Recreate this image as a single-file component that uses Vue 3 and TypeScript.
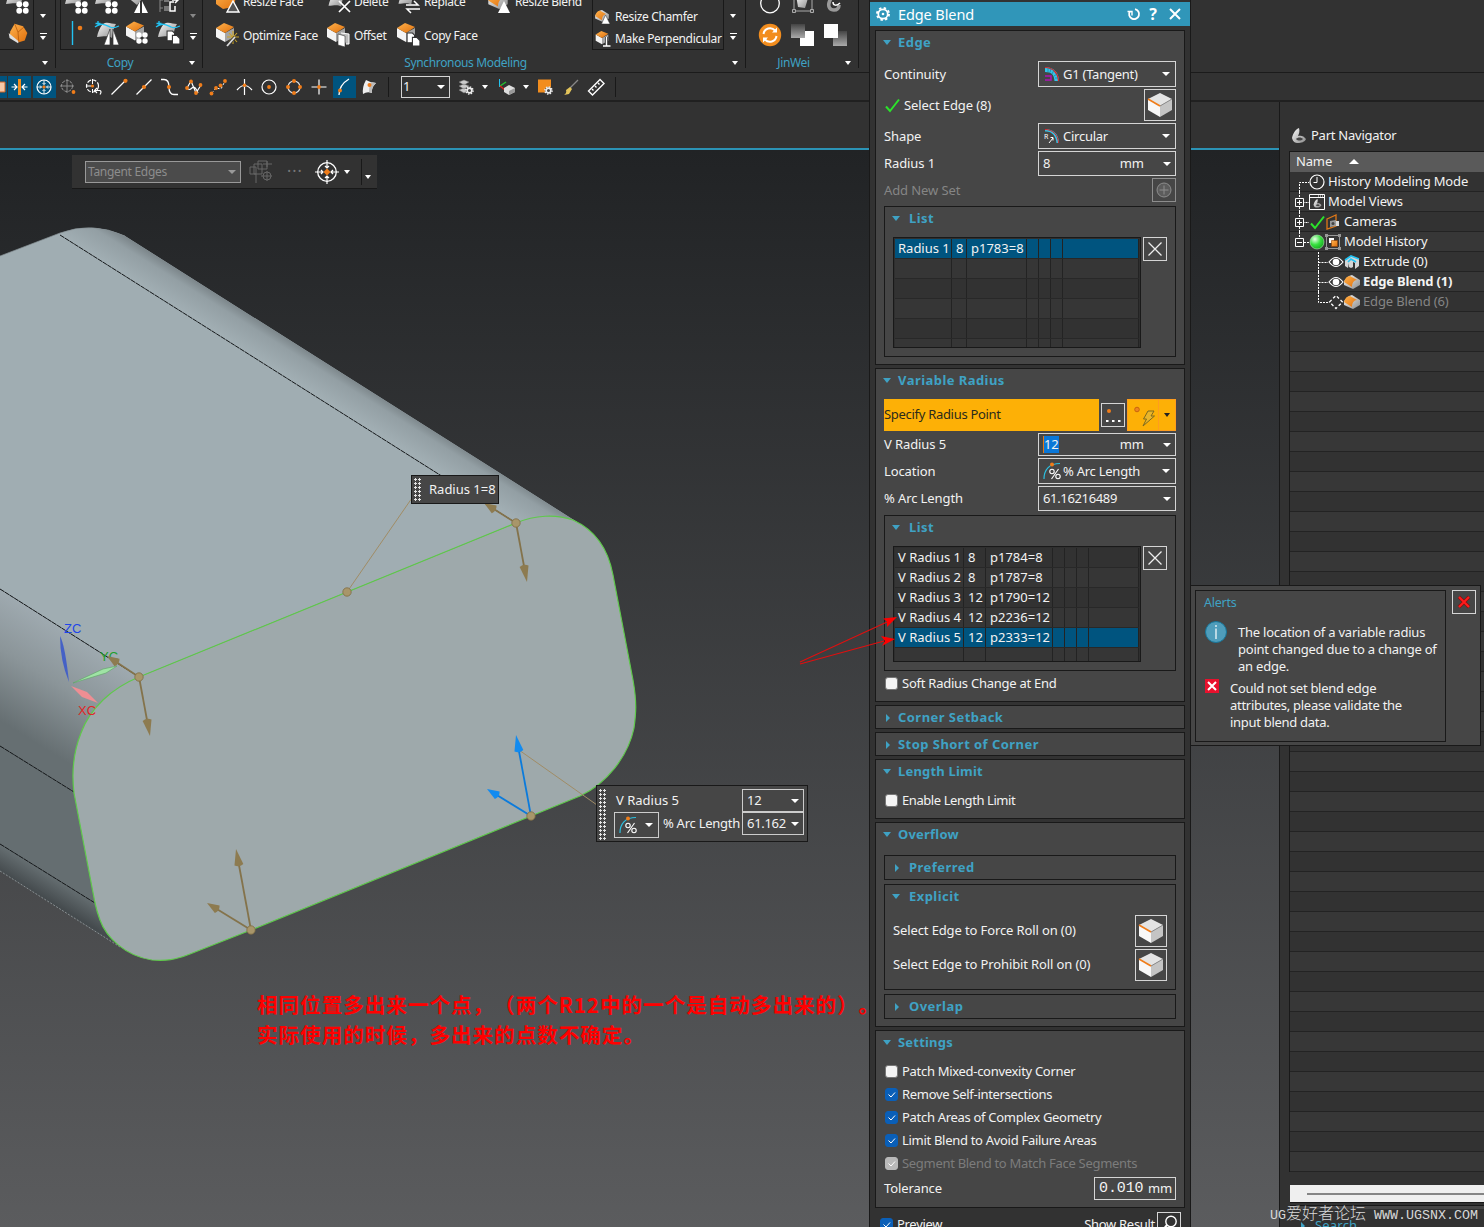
<template>
  <div class="app">
    <svg class="sprite" width="0" height="0">
      <defs>
        <linearGradient id="gOrange" x1="0" y1="0" x2="1" y2="1">
          <stop offset="0" stop-color="#ffb24d" />
          <stop offset="1" stop-color="#e0700c" />
        </linearGradient>
        <linearGradient id="gGrey" x1="0" y1="0" x2="1" y2="1">
          <stop offset="0" stop-color="#fafafa" />
          <stop offset="1" stop-color="#8a8a8a" />
        </linearGradient>
        <linearGradient id="gFade" x1="0" y1="0" x2="0" y2="1">
          <stop offset="0" stop-color="#444" />
          <stop offset="1" stop-color="#aaa" />
        </linearGradient>
        <radialGradient id="gGreen" cx="0.35" cy="0.3" r="0.8">
          <stop offset="0" stop-color="#eaffea" />
          <stop offset="0.5" stop-color="#37e03f" />
          <stop offset="1" stop-color="#14a01c" />
        </radialGradient>
      </defs>

      <symbol id="dots" viewBox="0 0 12 12">
        <circle cx="3" cy="3" r="2.7" fill="#fff" /><circle cx="9" cy="3" r="2.7" fill="#fff" />
        <circle cx="3" cy="9" r="2.7" fill="#fff" /><circle cx="9" cy="9" r="2.7" fill="#fff" />
      </symbol>
      <symbol id="pages" viewBox="0 0 14 14">
        <path d="M1 1h5l2 2v7H1z" fill="#fff" stroke="#333" />
        <path d="M6 5h4l3 3v5H6z" fill="#fff" stroke="#333" />
      </symbol>
      <symbol id="gear" viewBox="0 0 10 10">
        <circle cx="5" cy="5" r="4" fill="#444" stroke="#eee" stroke-width="1.600" stroke-dasharray="1.6 1.5" />
        <circle cx="5" cy="5" r="2.6" fill="none" stroke="#eee" stroke-width="1.800" />
      </symbol>
      <symbol id="block" viewBox="0 0 20 20">
        <path d="M1 5l9 5v9l-9-5z" fill="#f4f4f4" />
        <path d="M10 10l9-5v9l-9 5z" fill="#a5a5a5" />
        <path d="M1 5l8-5 10 4-9 6z" fill="url(#gOrange)" />
      </symbol>
      <symbol id="surface" viewBox="0 0 22 20">
        <path d="M1 15C3 6 6 2 9 1c4-1 7 1 11 1-3 5-3 9-4 14-5-3-9-1-15-1z" fill="url(#gGrey)" />
      </symbol>
      <symbol id="cube" viewBox="0 0 26 26">
        <path d="M13 1l12 6-12 7L1 7z" fill="#e4e4e4" />
        <path d="M1 7l12 7v11L1 18z" fill="#f8f8f8" />
        <path d="M25 7l-12 7v11l12-7z" fill="#c4c4c4" />
        <path d="M13 14l12-7" stroke="#888" stroke-width=".9" />
        <path d="M1 7l12 7" stroke="#f07d1a" stroke-width="1.600" />
      </symbol>
      <symbol id="fillet" viewBox="0 0 16 16">
        <path d="M1 6C8 6 10 9 10.500 15H15C15 6 9 1 1 1z" fill="#33c4e8" />
        <path d="M1 1.500C9 1.500 14 7 14.500 15" fill="none" stroke="#e02020" stroke-width="1.200" />
        <path d="M4 2v4M7 2.500L6 6.500M10 4L8 8M13 8l-3 2M14 12h-3" stroke="#1a7f9a" stroke-width=".7" />
      </symbol>
      <symbol id="arcpct" viewBox="0 0 18 18">
        <path d="M1 17C1 8 6 1.500 17 1.500" fill="none" stroke="#2cc0e0" stroke-width="1.200" />
        <circle cx="9" cy="2.600" r="2" fill="#f07d1a" />
        <circle cx="9" cy="9.500" r="2.200" fill="none" stroke="#fff" stroke-width="1.100" />
        <circle cx="15" cy="14.500" r="2.200" fill="none" stroke="#fff" stroke-width="1.100" />
        <path d="M15.500 7L8.500 17" stroke="#fff" stroke-width="1.100" />
      </symbol>
      <symbol id="blend" viewBox="0 0 16 14">
        <path d="M0 6l5-5 3-1 8 5v5l-7 4-9-4z" fill="url(#gGrey)" />
        <path d="M0 7C1 3 3 1 6 1l7 4c-3 0-5 3-5 7z" fill="url(#gOrange)" />
      </symbol>
      <symbol id="shell" viewBox="0 0 16 16">
        <path d="M1 10C2 5 5 1 8 0c1 3 0 6-1 8 3-1 6 0 8 3-1 3-5 4-8 4-3 0-5-1-6-5z" fill="url(#gGrey)" />
        <path d="M5 11c2-2 5-2 7 0-2 2-5 2-7 0z" fill="#444" />
      </symbol>

      <!-- ribbon -->
      <symbol id="r-surfdots" viewBox="0 0 26 26">
        <use href="#surface" x="0" y="1" width="22" height="20" /><use href="#dots" x="11" y="13" width="13" height="13" />
      </symbol>
      <symbol id="r-mirror0" viewBox="0 0 26 26">
        <path d="M2 8l10-6 9 5-8 10z" fill="url(#gGrey)" />
        <path d="M10 25l6-12v12zM24 25l-6-12v12z" fill="#fff" />
      </symbol>
      <symbol id="r-tree" viewBox="0 0 26 26">
        <path d="M5 2v22M5 12h3M5 20h3" stroke="#888" />
        <path d="M9 9h5v5H9zM9 18h5v5H9z" fill="#777" />
        <path d="M20 18v5h-5V14h4M17 12h6M20 9l3 3-3 3" fill="none" stroke="#fff" stroke-width="1.500" />
      </symbol>
      <symbol id="r-box" viewBox="0 0 26 26">
        <path d="M4 11L9 2l10 3 5 8-3 9-7 2-11-8z" fill="url(#gOrange)" />
        <path d="M2 13l1 6 10 6 1-2z" fill="#ddd" /><path d="M9 2l4 10 1 12M13 12l7-6" stroke="#a94f04" fill="none" stroke-width=".8" />
      </symbol>
      <symbol id="r-axis" viewBox="0 0 26 26">
        <path d="M8.500 1v24" stroke="#22c3f3" stroke-width="1.400" /><circle cx="16" cy="8" r="2.300" fill="#f07d1a" />
      </symbol>
      <symbol id="r-mirror" viewBox="0 0 26 26">
        <use href="#surface" x="2" y="2" width="22" height="20" />
        <path d="M10 25l6-16v16zM25 25l-6-16v16z" fill="#fff" stroke="#333" stroke-width=".7" />
        <path d="M1 7C7 2 12 5 16 7s6 0 9-1M4 1v5M1.500 3.500h5" fill="none" stroke="#22c3f3" stroke-width="1.300" />
      </symbol>
      <symbol id="r-pattern" viewBox="0 0 26 26">
        <use href="#block" x="1" y="1" width="20" height="21" /><use href="#dots" x="12" y="12" width="12" height="12" />
      </symbol>
      <symbol id="r-copygeo" viewBox="0 0 26 26">
        <use href="#surface" x="2" y="2" width="22" height="20" />
        <path d="M1 7C7 2 12 5 16 7s6 0 9-1M4 1v5M1.500 3.500h5" fill="none" stroke="#22c3f3" stroke-width="1.300" />
        <use href="#pages" x="11" y="10" width="15" height="15" />
      </symbol>
      <symbol id="r-resize" viewBox="0 0 26 26">
        <path d="M1 8l10-5 11 4-4 12-10 2-7-5z" fill="url(#gOrange)" />
        <path d="M12 24l6-11 6 11z" fill="#555" stroke="#fff" stroke-width="1.400" />
      </symbol>
      <symbol id="r-delete" viewBox="0 0 26 26">
        <use href="#surface" x="1" y="5" width="20" height="17" />
        <path d="M13 13l11 11M24 13L13 24" stroke="#fff" stroke-width="1.700" />
      </symbol>
      <symbol id="r-replace" viewBox="0 0 26 26">
        <use href="#surface" x="1" y="3" width="20" height="17" />
        <path d="M10 17h12l-4-4M24 21H11l4 4" fill="none" stroke="#fff" stroke-width="1.500" />
      </symbol>
      <symbol id="r-reblend" viewBox="0 0 26 26">
        <use href="#blend" x="1" y="4" width="20" height="17" /><path d="M11 25l6-12 6 12z" fill="#fff" />
      </symbol>
      <symbol id="r-optimize" viewBox="0 0 26 26">
        <use href="#block" x="0" y="1" width="20" height="20" />
        <path d="M18 9v13M12 15h12M14 11l8 9M22 11l-8 9" stroke="#c9a227" stroke-width="1.100" />
        <path d="M12 24l8-9" stroke="#333" stroke-width="3.200" /><path d="M12 24l8-9" stroke="#ddd" stroke-width="1.800" />
      </symbol>
      <symbol id="r-offset" viewBox="0 0 26 26">
        <use href="#block" x="0" y="1" width="20" height="20" />
        <path d="M15 11l8 1v10h-3" fill="#bbb" stroke="#fff" /><path d="M12 12l7 2v11l-7-2z" fill="#fff" stroke="#333" stroke-width=".6" />
      </symbol>
      <symbol id="r-copyface" viewBox="0 0 26 26">
        <use href="#block" x="0" y="1" width="20" height="20" /><use href="#pages" x="10" y="10" width="15" height="15" />
      </symbol>
      <symbol id="r-chamfer" viewBox="0 0 16 16">
        <use href="#blend" x="0" y="1" width="14" height="12" /><path d="M6.500 15l4-9 4.500 9z" fill="#fff" stroke="#333" stroke-width=".5" />
      </symbol>
      <symbol id="r-perp" viewBox="0 0 16 16">
        <use href="#block" x="0" y="0" width="14" height="14" /><path d="M11.500 6v9M8 15h7.500" stroke="#333" stroke-width="3" /><path d="M11.500 6v9M8 15h7.500" stroke="#fff" stroke-width="1.400" />
      </symbol>
      <symbol id="r-circle" viewBox="0 0 26 26">
        <circle cx="13" cy="13.500" r="9.300" fill="none" stroke="#fff" stroke-width="1.300" />
      </symbol>
      <symbol id="r-frame" viewBox="0 0 26 26">
        <path d="M4 2v19h18V2" fill="none" stroke="#aaa" /><path d="M6 5h13l-4 13-7-1z" fill="url(#gGrey)" />
        <path d="M2.500 19.500h3v3h-3zM20.500 19.500h3v3h-3z" fill="#444" stroke="#aaa" />
      </symbol>
      <symbol id="r-hook" viewBox="0 0 26 26">
        <path d="M13 2c-3 3-6 7-7 11-1 4 1 7 5 7 3 0 5-2 5-5" fill="none" stroke="#999" stroke-width="3.600" />
        <path d="M10 12c0 4 4 4 7 1" stroke="#fff" fill="none" stroke-width="1.500" />
      </symbol>
      <symbol id="r-refresh" viewBox="0 0 26 26">
        <circle cx="13" cy="13" r="11.200" fill="#f28d1e" />
        <path d="M6.500 12a6.600 6.600 0 0 1 11.500-3.500M19.500 14A6.600 6.600 0 0 1 8 17.500" fill="none" stroke="#fff" stroke-width="2" />
        <path d="M20 5.500v5h-5zM6 20.500v-5h5z" fill="#fff" />
      </symbol>
      <symbol id="r-sq1" viewBox="0 0 26 26">
        <path d="M10 9h14v15H10z" fill="#fff" /><path d="M1 2h14v14H1z" fill="url(#gFade)" />
      </symbol>
      <symbol id="r-sq2" viewBox="0 0 26 26">
        <path d="M10 9h14v15H10z" fill="url(#gFade)" /><path d="M1 2h14v14H1z" fill="#fff" />
      </symbol>

      <!-- snap toolbar -->
      <symbol id="t-edge" viewBox="0 0 20 20"><path d="M12 5h6v10h-6z" fill="#f6c9a8" stroke="#d06020" /></symbol>
      <symbol id="t-align" viewBox="0 0 20 20">
        <path d="M10.500 2v16" stroke="#f28d1e" stroke-width="3" />
        <path d="M2.500 10H8M5 7l3 3-3 3M18.500 10H13M16 7l-3 3 3 3" fill="none" stroke="#fff" stroke-width="1.200" />
      </symbol>
      <symbol id="t-target" viewBox="0 0 20 20">
        <circle cx="10" cy="10" r="7" fill="none" stroke="#fff" stroke-width="1.200" />
        <path d="M10 3v4.500M10 17v-4.500M3 10h4.500M17 10h-4.500M8.500 6l1.500 1.500L11.500 6M8.500 14l1.500-1.500 1.500 1.500M6 8.500L7.500 10 6 11.500M14 8.500L12.500 10l1.500 1.500" fill="none" stroke="#fff" stroke-width=".9" />
        <circle cx="10" cy="10" r="1.700" fill="#f07d1a" />
      </symbol>
      <symbol id="t-targetdim" viewBox="0 0 20 20">
        <circle cx="8" cy="9" r="5.500" fill="none" stroke="#999" stroke-dasharray="3 1" />
        <path d="M8 2v14M1 9h14" stroke="#888" /><circle cx="14.500" cy="15" r="1.900" fill="#f07d1a" />
      </symbol>
      <symbol id="t-targetback" viewBox="0 0 20 20">
        <circle cx="8.500" cy="9" r="6" fill="none" stroke="#fff" stroke-width="1.200" stroke-dasharray="4 1.500" />
        <path d="M8.500 2v5M2 9h5M8.500 16v-4" stroke="#fff" /><circle cx="8.500" cy="9" r="1.600" fill="#f07d1a" />
        <path d="M11 13.500h5q2 1 0 4M13 11l-2.500 2.500L13 16" fill="#323232" stroke="#fff" stroke-width="1.200" />
      </symbol>
      <symbol id="t-end" viewBox="0 0 20 20"><path d="M2.500 17.500l14-14" stroke="#fff" stroke-width="1.300" /><circle cx="16.500" cy="3.800" r="2.100" fill="#f07d1a" /></symbol>
      <symbol id="t-mid" viewBox="0 0 20 20"><path d="M2.500 17.500l15-15" stroke="#fff" stroke-width="1.300" /><circle cx="10" cy="10" r="2.100" fill="#f07d1a" /></symbol>
      <symbol id="t-ctrl" viewBox="0 0 20 20"><path d="M2 2.500h3q5 0 5 7.500t5 7.500h4" fill="none" stroke="#fff" stroke-width="1.300" /><circle cx="10" cy="10" r="2" fill="#f07d1a" /></symbol>
      <symbol id="t-spline" viewBox="0 0 20 20">
        <path d="M3 11L7 4l5 12 5-8M3 11q2 3 5 0t6 5" fill="none" stroke="#fff" stroke-width="1.200" />
        <g fill="#f07d1a"><circle cx="7" cy="4.500" r="1.900" /><circle cx="3" cy="11" r="1.900" /><circle cx="12" cy="16" r="1.900" /><circle cx="16.500" cy="8" r="1.900" /></g>
      </symbol>
      <symbol id="t-points" viewBox="0 0 20 20">
        <path d="M3 16l4-5 5 1 4-8" stroke="#fff" fill="none" stroke-dasharray="2 2" />
        <g fill="#f07d1a"><circle cx="2.500" cy="16.500" r="1.900" /><circle cx="7" cy="11" r="1.900" /><circle cx="11.500" cy="8.500" r="1.900" /><circle cx="16" cy="4" r="1.900" /></g>
      </symbol>
      <symbol id="t-inter" viewBox="0 0 20 20"><path d="M10.500 2v16M3 13q7.500-9 15 0" fill="none" stroke="#fff" stroke-width="1.200" /><circle cx="10.500" cy="8.300" r="1.800" fill="#f07d1a" /></symbol>
      <symbol id="t-center" viewBox="0 0 20 20"><circle cx="10" cy="10" r="7" fill="none" stroke="#fff" stroke-width="1.200" /><circle cx="10" cy="10" r="1.900" fill="#f07d1a" /></symbol>
      <symbol id="t-quad" viewBox="0 0 20 20">
        <circle cx="10" cy="10" r="6" fill="none" stroke="#ddd" stroke-width="1.200" />
        <g fill="#f07d1a"><circle cx="10" cy="4" r="2" /><circle cx="10" cy="16" r="2" /><circle cx="4" cy="10" r="2" /><circle cx="16" cy="10" r="2" /></g>
      </symbol>
      <symbol id="t-exist" viewBox="0 0 20 20"><path d="M10 2.500v15M2.500 10h15" stroke="#fff" stroke-width="1.200" /><circle cx="10" cy="10" r="1.900" fill="#f07d1a" /></symbol>
      <symbol id="t-curve" viewBox="0 0 20 20"><path d="M5 18q0-10 10-16" fill="none" stroke="#fff" stroke-width="1.300" /><circle cx="6" cy="13.500" r="2" fill="#f07d1a" /></symbol>
      <symbol id="t-face" viewBox="0 0 20 20"><path d="M7 3q5 3 10 3-5 5-4 10-5-2-9 1-1-7 3-14z" fill="#eee" /><path d="M12 5l5 1q-5 5-4 10l-3-1q0-6 2-10z" fill="#bbb" /><circle cx="10.500" cy="8" r="2" fill="#f07d1a" /></symbol>
      <symbol id="t-layers" viewBox="0 0 20 20">
        <path d="M3 5l5-2 5 2-5 3zM3 9l5-2 5 2-5 3zM3 13l5-2 5 2-5 3z" fill="#ccc" stroke="#777" stroke-width=".5" /><use href="#gear" x="9" y="9" width="9" height="9" />
      </symbol>
      <symbol id="t-csys" viewBox="0 0 20 20">
        <path d="M2.500 2v8" stroke="#22c3f3" /><path d="M3 9l6-4" stroke="#26c030" stroke-width="1.500" /><path d="M3 9l5 4" stroke="#e02020" stroke-width="1.500" />
        <path d="M7 11l5-3 6 3v4l-6 3-5-3z" fill="#ddd" /><path d="M18 11l-6 3v4l6-3z" fill="#999" />
      </symbol>
      <symbol id="t-sheet" viewBox="0 0 20 20"><path d="M3 2.500h13v13H3z" fill="#f28d1e" /><use href="#gear" x="9" y="9" width="9" height="9" /></symbol>
      <symbol id="t-brush" viewBox="0 0 20 20"><path d="M17 3l-8 8" stroke="#888" stroke-width="1.200" /><path d="M9 10l2 2-3 5-5 1q3-2 2-5z" fill="#e3c45a" /></symbol>
      <symbol id="t-ruler" viewBox="0 0 20 20"><path d="M2.500 14L14 2.500l4 4L6.500 18zM6 12l1.500 1.500M9 9l1.500 1.500M12 6l1.500 1.500" fill="none" stroke="#fff" stroke-width="1.400" /></symbol>

      <!-- navigator -->
      <symbol id="n-clock" viewBox="0 0 16 16"><circle cx="8" cy="8" r="7" fill="none" stroke="#fff" stroke-width="1.200" /><path d="M8 3v5.500H4.500" fill="none" stroke="#fff" /></symbol>
      <symbol id="n-views" viewBox="0 0 16 16"><path d="M.5.500h15v15H.5zM.5 3.500h15" fill="none" stroke="#fff" /><path d="M9 2h1M11 2h1M13 2h1" stroke="#fff" /><use href="#shell" x="4" y="5" width="9" height="9" /></symbol>
      <symbol id="n-check" viewBox="0 0 16 16"><path d="M2 9.500l4 4.500L15 2.500" fill="none" stroke="#2be32b" stroke-width="2" /></symbol>
      <symbol id="n-cam" viewBox="0 0 16 16"><path d="M2 5l9-4v11l-9 3z" fill="none" stroke="#e07818" stroke-width="1.300" /><path d="M5 7l6-1v6l-6 1z" fill="#999" /><path d="M11 7h3v5h-3z" fill="#ddd" /><circle cx="8" cy="9.500" r="1.500" fill="#444" /></symbol>
      <symbol id="n-ball" viewBox="0 0 16 16"><circle cx="8" cy="8" r="7" fill="url(#gGreen)" stroke="#cfc" stroke-width=".5" /></symbol>
      <symbol id="n-hist" viewBox="0 0 16 16"><path d="M1.500 1.500h13v13h-13z" fill="none" stroke="#999" /><path d="M0 0h3v3H0zM13 0h3v3h-3zM0 13h3v3H0zM13 13h3v3h-3z" fill="#999" /><path d="M4 4h5v5H4z" fill="#fff" /><path d="M6.500 6.500h6v6h-6z" fill="url(#gOrange)" stroke="#933f00" stroke-width=".6" /></symbol>
      <symbol id="n-eye" viewBox="0 0 16 16"><path d="M1 8q7-9 14 0-7 9-14 0z" fill="none" stroke="#fff" stroke-width="1.200" /><circle cx="8" cy="8" r="3.300" fill="#fff" /></symbol>
      <symbol id="n-hidden" viewBox="0 0 16 16"><path d="M1.500 8L8 1.500 14.500 8 8 14.500z" fill="none" stroke="#fff" stroke-width="1.300" stroke-dasharray="3 2.200" /></symbol>
      <symbol id="n-extrude" viewBox="0 0 16 16"><path d="M1 6l6-4 8 3v7l-4 3V9L9 8v5l-2 1-2-1V9l-1 5-3-2z" fill="#d5d5d5" /><path d="M1 6l6-4 8 3M4 8l3-3 5 3" fill="none" stroke="#22c3f3" stroke-width="1.700" /></symbol>
    </svg>

    <header class="ribbon">
      <section class="group g-first">
        <div class="group-body">
          <div class="icon-box one">
            <svg class="i26"><use href="#r-surfdots" /></svg>
            <svg class="i22"><use href="#r-box" /></svg>
          </div>
          <div class="arrows"><i class="caret"></i><i class="caret bar"></i></div>
        </div>
        <div class="group-label"><i class="caret"></i></div>
      </section>
      <section class="group g-copy">
        <div class="group-body">
          <div class="icon-box four">
            <svg v-for="n in copyIcons" :key="n.key" class="i26"><use :href="'#' + n.icon" /></svg>
          </div>
          <div class="arrows"><i class="caret dim"></i><i class="caret bar"></i></div>
        </div>
        <div class="group-label"><span>Copy</span><i class="caret"></i></div>
      </section>
      <section class="group g-sync">
        <div class="group-body">
          <div class="commands">
            <div v-for="c in syncCommands" :key="c.label" class="command">
              <svg class="i26"><use :href="'#' + c.icon" /></svg><span>{{ c.label }}</span>
            </div>
          </div>
          <div class="small-box">
            <div class="small-cmd"><svg class="i16"><use href="#r-chamfer" /></svg><span>Resize Chamfer</span></div>
            <div class="small-cmd"><svg class="i16"><use href="#r-perp" /></svg><span>Make Perpendicular</span></div>
          </div>
          <div class="arrows"><i class="caret"></i><i class="caret bar"></i></div>
        </div>
        <div class="group-label"><span>Synchronous Modeling</span><i class="caret"></i></div>
      </section>
      <section class="group g-jin">
        <div class="group-body">
          <div class="jin-icons">
            <svg v-for="n in jinIcons" :key="n" class="i26"><use :href="'#' + n" /></svg>
          </div>
        </div>
        <div class="group-label"><span>JinWei</span><i class="caret"></i></div>
      </section>
    </header>

    <nav class="toolbar">
      <div class="snap edge on"><svg class="i20"><use href="#t-edge" /></svg></div>
      <div v-for="s in snaps" :key="s.icon" class="snap" :class="{ on: s.on }">
        <svg class="i20"><use :href="'#t-' + s.icon" /></svg>
      </div>
      <div class="tool-sep"></div>
      <div class="layer-select"><span>1</span><i class="caret big"></i></div>
      <svg class="i20 t1"><use href="#t-layers" /></svg>
      <i class="caret"></i>
      <svg class="i20 t2"><use href="#t-csys" /></svg>
      <i class="caret"></i>
      <svg class="i20 t3"><use href="#t-sheet" /></svg>
      <svg class="i20 t3"><use href="#t-brush" /></svg>
      <svg class="i20 t4"><use href="#t-ruler" /></svg>
      <div class="tool-sep last"></div>
    </nav>

    <main class="main">
      <div class="work">
        <div class="border-bar"></div>
        <div class="viewport">
          <svg class="model" width="1279" height="1077" viewBox="0 150 1279 1077">
            <defs>
              <linearGradient id="bandTop" gradientUnits="userSpaceOnUse" x1="300" y1="384" x2="320" y2="352">
                <stop offset="0" stop-color="#a1aeb3" /><stop offset="0.6" stop-color="#939fa4" /><stop offset="1" stop-color="#6f787c" />
              </linearGradient>
              <linearGradient id="bandLeft" gradientUnits="userSpaceOnUse" x1="0" y1="589" x2="-59" y2="684">
                <stop offset="0" stop-color="#9faab0" /><stop offset="0.45" stop-color="#8b9599" /><stop offset="1" stop-color="#666f72" />
              </linearGradient>
              <linearGradient id="bandLow" gradientUnits="userSpaceOnUse" x1="0" y1="844" x2="-12" y2="864">
                <stop offset="0" stop-color="#666f72" /><stop offset="1" stop-color="#454b4e" />
              </linearGradient>
            </defs>
            <path d="M0 256L60 233Q92 221 125 236L577 522L516 523L139 677L0 589Z" fill="#a0adb2" />
            <path d="M60 234Q92 221 125 236L577 522L545 530L516 523Z" fill="url(#bandTop)" />
            <path d="M0 589L139 677L160 800L74 793L0 746Z" fill="url(#bandLeft)" />
            <path d="M0 746L74 792L120 903H95L0 844Z" fill="#656e71" />
            <path d="M0 844L95 903L160 961L120 947L0 871Z" fill="url(#bandLow)" />
            <path d="M60 235L516 523M0 589L139 677M0 746L74 792M0 844L95 903" fill="none" stroke="#15181a" stroke-dasharray="5 .6" />
            <path d="M0 256L60 233Q92 221 125 236" fill="none" stroke="#858f93" stroke-width=".7" />
            <path d="M0 871L120 947" stroke="#a5adb0" stroke-width=".7" stroke-dasharray="2 1.500" />
            <path
              d="M139 677L516 523C535 515 556 514 573 520C595 530 608 548 613 575L633 680C637 703 636 713 634 728C628 757 606 784 580 796L531 816L251 930L190 954C175 960 166 961 152 960C125 956 106 937 100 920Q97 912 95 903L74 793C71 768 75 748 81 733C90 708 112 688 139 677Z"
              fill="#9ea9ab" stroke="#5fc94b" stroke-width="1.200"
            />

            <path d="M60 636Q65 645 69 682Q60 660 60 636Z" fill="#4561c6" />
            <path d="M73 683L103 669L117 666L106 673Z" fill="#9fe3a5" stroke="#5da564" stroke-width=".6" />
            <path d="M71 686L87 692L98 703L82 697Z" fill="#ee8e93" />
            <text x="64" y="633" class="axis" fill="#1f46e8">ZC</text>
            <text x="100" y="661" class="axis" fill="#23a02c">YC</text>
            <text x="78" y="715" class="axis" fill="#e02727">XC</text>

            <g class="leader"><path d="M347 592L412 498M519 750L597 805" /></g>
            <g v-for="(h, i) in handles" :key="i" :stroke="h.blue ? '#0b7bdc' : '#84734b'" :fill="h.blue ? '#128bf0' : '#8d7b50'">
              <path v-for="(p, j) in h.tips" :key="j" :d="shaft(h, p)" stroke-width="1.800" />
              <path v-for="(p, j) in h.tips" :key="'t' + j" :d="arrowHead(h, p)" stroke="none" />
              <circle :cx="h.x" :cy="h.y" r="4.200" fill="#a8966a" stroke="#7d6c43" stroke-width=".8" />
            </g>
            <circle cx="347" cy="592" r="4.200" fill="#a8966a" stroke="#7d6c43" stroke-width=".8" />
          </svg>

          <div class="selection-bar">
            <div class="tangent"><span>Tangent Edges</span><i class="caret big"></i></div>
            <svg class="dimtool" viewBox="0 0 26 26">
              <path d="M2 8h6v7H2zM6 5h8v10H6zM10 2h9v8h-9zM8 15v9M19 2v6M15 5h9M19 12v10M13 17h11" fill="none" stroke="#666" />
              <circle cx="19" cy="17" r="4" fill="none" stroke="#666" />
            </svg>
            <span class="ellipsis">···</span>
            <svg class="aim" viewBox="0 0 24 24">
              <circle cx="12" cy="12" r="9.300" fill="none" stroke="#fff" stroke-width="1.300" />
              <path d="M12 0v8M12 24v-8M0 12h8M24 12h-8M10 6l2 2 2-2M10 18l2-2 2 2M6 10l2 2-2 2M18 10l-2 2 2 2" fill="none" stroke="#fff" stroke-width="1.200" />
              <path d="M12 8.500l3.500 3.500-3.500 3.500L8.500 12z" fill="#f07d1a" />
            </svg>
            <i class="caret"></i>
            <div class="sel-end"><i class="caret"></i></div>
          </div>

          <div class="tag"><i class="grip"></i><span>Radius 1=8</span></div>
          <div class="mini">
            <i class="grip"></i>
            <div class="mini-body">
              <div class="mini-row">
                <span>V Radius 5</span>
                <div class="mini-field"><span>12</span><i class="caret big"></i></div>
              </div>
              <div class="mini-row">
                <div class="mini-type"><svg class="i18"><use href="#arcpct" /></svg><i class="caret big"></i></div>
                <span>% Arc Length</span>
                <div class="mini-field"><span>61.162</span><i class="caret big"></i></div>
              </div>
            </div>
          </div>

          <div class="note">
            <p>相同位置多出来一个点，（两个R12中的一个是自动多出来的）。</p>
            <p>实际使用的时候，多出来的点数不确定。</p>
          </div>
        </div>
      </div>

      <aside class="navigator">
        <div class="nav-title"><svg class="i16"><use href="#shell" /></svg><span>Part Navigator</span></div>
        <div class="nav-list">
          <div class="nav-head"><span>Name</span><i class="up"></i></div>
          <div v-for="(t, i) in treeRows" :key="i" class="nav-row">
            <template v-if="t">
              <svg :width="t.deep ? 38 : 19" height="20">
                <g fill="none" stroke="#fff" stroke-dasharray="2 1">
                  <path v-if="t.deep" :d="t.last ? 'M28.500 0V10.500H38' : 'M28.500 0V20M28.500 10.500H38'" />
                  <path v-else :d="t.first ? 'M9.500 20V10.500H19' : t.last ? 'M9.500 0V10.500H19' : 'M9.500 0V20M9.500 10.500H19'" />
                </g>
                <g v-if="t.box">
                  <path d="M5.500 6.500h8v8h-8z" fill="#333" stroke="#fff" />
                  <path :d="t.box === '+' ? 'M7 10.500h5M9.500 8v5' : 'M7 10.500h5'" stroke="#fff" />
                </g>
              </svg>
              <svg v-for="ic in t.icons" :key="ic" class="i16"><use :href="'#' + ic" /></svg>
              <span :class="{ bold: t.bold, dim: t.dim }">{{ t.label }}</span>
            </template>
          </div>
        </div>
        <div class="nav-scroll"><i></i></div>
        <div class="nav-search"><i class="tri right"></i><span>Search</span></div>
      </aside>
    </main>

    <section class="dialog">
      <div class="dlg-title">
        <svg width="16" height="16" viewBox="0 0 16 16">
          <circle cx="8" cy="8" r="6" fill="none" stroke="#fff" stroke-width="2" stroke-dasharray="2.360 2.350" />
          <circle cx="8" cy="8" r="4.700" fill="none" stroke="#fff" stroke-width="1.700" /><circle cx="8" cy="8" r="1.300" fill="#fff" />
        </svg>
        <span>Edge Blend</span>
        <svg class="reset" width="14" height="14" viewBox="0 0 14 14">
          <path d="M2.800 4.500A5 5 0 1 0 8 2.200" fill="none" stroke="#fff" stroke-width="1.800" /><path d="M.500 4.500h4.500v4" fill="none" stroke="#fff" stroke-width="1.400" />
        </svg>
        <b class="help">?</b>
        <svg width="12" height="12" viewBox="0 0 12 12"><path d="M1 1l10 10M11 1L1 11" stroke="#fff" stroke-width="2" /></svg>
      </div>

      <div class="panels">
        <div class="panel p-edge">
          <h3><i class="tri"></i>Edge</h3>
          <div class="row h26"><label>Continuity</label>
            <div class="combo"><svg class="i16"><use href="#fillet" /><path d="M1 10h6v4H1" fill="none" stroke="#b012b8" stroke-width="1.500" /></svg><span>G1 (Tangent)</span><i class="caret big"></i></div>
          </div>
          <div class="row h32"><svg class="i16"><use href="#n-check" /></svg><label class="picked">Select Edge (8)</label><div class="cube-btn"><svg class="i26"><use href="#cube" /></svg></div></div>
          <div class="row h26"><label>Shape</label>
            <div class="combo">
              <svg class="i16" viewBox="0 0 16 16"><path d="M1 3.500C8 3 12 8 12.500 15H15C15 6 9 1 1 1z" fill="#33c4e8" /><path d="M1 1.500C9 1.500 14 7 14.500 15" fill="none" stroke="#e02020" /><text x="0" y="11" font-size="7" fill="#fff">R</text><path d="M5 15l4-5M6.500 9.500H9v3" fill="none" stroke="#fff" /></svg>
              <span>Circular</span><i class="caret big"></i>
            </div>
          </div>
          <div class="row h25"><label>Radius 1</label><div class="combo num"><span>8</span><em>mm</em><i class="caret big"></i></div></div>
          <div class="row h24"><label class="dim">Add New Set</label>
            <div class="add-btn"><svg width="16" height="16"><circle cx="8" cy="8" r="7" fill="#5c5c5c" stroke="#8d8d8d" /><path d="M3.500 8h9M8 3.500v9" stroke="#8d8d8d" /></svg></div>
          </div>
          <div class="sub list-edge">
            <h3><i class="tri"></i>List</h3>
            <div class="list-wrap">
              <div class="grid-list short">
                <div v-for="(r, i) in radiusRows" :key="i" class="grid-row" :class="{ on: i === 0 }"><b v-for="(c, j) in r" :key="j">{{ c }}</b></div>
              </div>
              <div class="x-btn"><svg width="16" height="16"><path d="M1.500 1.500l13 13M14.500 1.500l-13 13" stroke="#eee" stroke-width="1.300" /></svg></div>
            </div>
          </div>
        </div>

        <div class="panel p-var">
          <h3><i class="tri"></i>Variable Radius</h3>
          <div class="row h32 specify">
            <div class="spec-label">Specify Radius Point</div>
            <div class="pt-btn"><svg width="22" height="22"><circle cx="7" cy="7" r="2" fill="#f07d1a" /><path d="M4 16h2.500v2H4zM10 16h2.500v2H10zM16 16h2.500v2H16z" fill="#fff" /></svg></div>
            <div class="infer">
              <svg width="30" height="30"><circle cx="9" cy="9.500" r="2.300" fill="#ee8520" stroke="#c8650c" /><path d="M20 11h6l-3 5h3.500L15 26l3.500-7H15.500z" fill="#e9b52b" stroke="#7d6a1f" /></svg>
              <div class="infer-drop"><i class="caret dark"></i></div>
            </div>
          </div>
          <div class="row h23"><label>V Radius 5</label><div class="combo num"><span class="sel">12</span><em>mm</em><i class="caret big"></i></div></div>
          <div class="row h26"><label>Location</label><div class="combo"><svg class="i18"><use href="#arcpct" /></svg><span class="tight">% Arc Length</span><i class="caret big"></i></div></div>
          <div class="row h25"><label>% Arc Length</label><div class="combo num"><span class="long">61.16216489</span><i class="caret big"></i></div></div>
          <div class="sub list-var">
            <h3><i class="tri"></i>List</h3>
            <div class="list-wrap">
              <div class="grid-list tall">
                <div v-for="(r, i) in vRadiusRows" :key="i" class="grid-row" :class="{ on: i === 4 }"><b v-for="(c, j) in r" :key="j">{{ c }}</b></div>
              </div>
              <div class="x-btn"><svg width="16" height="16"><path d="M1.500 1.500l13 13M14.500 1.500l-13 13" stroke="#eee" stroke-width="1.300" /></svg></div>
            </div>
          </div>
          <div class="check soft"><i class="cb"></i>Soft Radius Change at End</div>
        </div>

        <div class="panel closed"><h3><i class="tri right"></i>Corner Setback</h3></div>
        <div class="panel closed"><h3><i class="tri right"></i>Stop Short of Corner</h3></div>
        <div class="panel p-len">
          <h3><i class="tri"></i>Length Limit</h3>
          <div class="check len"><i class="cb"></i>Enable Length Limit</div>
        </div>

        <div class="panel p-over">
          <h3><i class="tri"></i>Overflow</h3>
          <div class="sub closed"><h3><i class="tri right"></i>Preferred</h3></div>
          <div class="sub explicit">
            <h3><i class="tri"></i>Explicit</h3>
            <div class="roll"><label>Select Edge to Force Roll on (0)</label><div class="cube-btn"><svg class="i26"><use href="#cube" /></svg></div></div>
            <div class="roll"><label>Select Edge to Prohibit Roll on (0)</label><div class="cube-btn"><svg class="i26"><use href="#cube" /></svg></div></div>
          </div>
          <div class="sub closed"><h3><i class="tri right"></i>Overlap</h3></div>
        </div>

        <div class="panel p-set">
          <h3><i class="tri"></i>Settings</h3>
          <div v-for="s in settings" :key="s.label" class="check" :class="{ dim: s.disabled }">
            <i class="cb" :class="{ yes: s.checked, off: s.disabled }"><svg v-if="s.checked" width="11" height="11"><path d="M2.500 5.500L5 8l4-4.500" fill="none" stroke="#fff" /></svg></i>{{ s.label }}
          </div>
          <div class="row h23 tol"><label>Tolerance</label><div class="tol-field"><span>0.010</span><em>mm</em></div></div>
        </div>
      </div>

      <div class="preview">
        <i class="cb yes"><svg width="11" height="11"><path d="M2.500 5.500L5 8l4-4.500" fill="none" stroke="#fff" /></svg></i><span>Preview</span>
        <span class="show">Show Result</span>
        <div class="mag"><svg width="22" height="22"><circle cx="13" cy="8.500" r="5.200" fill="none" stroke="#fff" stroke-width="1.400" /><path d="M9 12l-5 6" stroke="#fff" stroke-width="2" /></svg></div>
      </div>
    </section>

    <section class="alerts">
      <div class="alert-box">
        <h4>Alerts</h4>
        <div class="alert info">
          <svg width="24" height="24"><circle cx="12" cy="12" r="10.500" fill="#4f9dbb" stroke="#17769a" /><path d="M12 5v2M12 8.500V19" stroke="#fff" stroke-width="1.200" /></svg>
          <p>The location of a variable radius<br />point changed due to a change of<br />an edge.</p>
        </div>
        <div class="alert err">
          <svg width="14" height="14"><path d="M0 0h14v14H0z" fill="#e8112d" /><path d="M3 3l8 8M11 3l-8 8" stroke="#fff" stroke-width="2" /></svg>
          <p>Could not set blend edge<br />attributes, please validate the<br />input blend data.</p>
        </div>
      </div>
      <div class="alert-close"><svg width="16" height="16"><path d="M3 3l10 10M13 3L3 13" stroke="#8d0d0d" stroke-width="3.400" /><path d="M3 3l10 10M13 3L3 13" stroke="#ff1c1c" stroke-width="2" /></svg></div>
    </section>

    <svg class="callouts" width="110" height="60" viewBox="795 610 110 60">
      <g stroke="#e00f0f" stroke-width="1.100"><path d="M800 662L887 622" /><path d="M800 664L884 641" /></g>
      <path d="M897 617L887 627L887 621.500L883 618.500Z M895 639L882 646L885 641L881 636Z" fill="#f00" />
    </svg>
    <div class="watermark">UG<span>爱好者论坛</span> WWW.UGSNX.COM</div>
  </div>
</template>

<script setup lang="ts">
import { ref } from 'vue'

interface TreeRow {
  label: string
  icons: string[]
  box?: string
  first?: boolean
  last?: boolean
  deep?: boolean
  bold?: boolean
  dim?: boolean
}

interface Handle {
  x: number
  y: number
  tips: number[][]
  blue?: boolean
}

const copyIcons = ref(
  ['r-surfdots', 'r-surfdots', 'r-mirror0', 'r-tree', 'r-axis', 'r-mirror', 'r-pattern', 'r-copygeo'].map((icon, key) => ({ icon, key }))
)

const syncCommands = ref([
  { label: 'Resize Face', icon: 'r-resize' },
  { label: 'Delete', icon: 'r-delete' },
  { label: 'Replace', icon: 'r-replace' },
  { label: 'Resize Blend', icon: 'r-reblend' },
  { label: 'Optimize Face', icon: 'r-optimize' },
  { label: 'Offset', icon: 'r-offset' },
  { label: 'Copy Face', icon: 'r-copyface' }
])

const jinIcons = ref(['r-circle', 'r-frame', 'r-hook', 'r-refresh', 'r-sq1', 'r-sq2'])

const snaps = ref([
  { icon: 'align', on: true },
  { icon: 'target', on: true },
  { icon: 'targetdim' },
  { icon: 'targetback' },
  { icon: 'end' },
  { icon: 'mid' },
  { icon: 'ctrl' },
  { icon: 'spline' },
  { icon: 'points' },
  { icon: 'inter' },
  { icon: 'center' },
  { icon: 'quad' },
  { icon: 'exist' },
  { icon: 'curve', on: true },
  { icon: 'face' }
])

const tree: TreeRow[] = [
  { label: 'History Modeling Mode', icons: ['n-clock'], first: true },
  { label: 'Model Views', icons: ['n-views'], box: '+' },
  { label: 'Cameras', icons: ['n-check', 'n-cam'], box: '+' },
  { label: 'Model History', icons: ['n-ball', 'n-hist'], box: '-', last: true },
  { label: 'Extrude (0)', icons: ['n-eye', 'n-extrude'], deep: true },
  { label: 'Edge Blend (1)', icons: ['n-eye', 'blend'], deep: true, bold: true },
  { label: 'Edge Blend (6)', icons: ['n-hidden', 'blend'], deep: true, last: true, dim: true }
]

// the list is padded with empty striped rows
const treeRows = Array.from({ length: 50 }, (_, i) => tree[i])

const blank = ['', '', '', '', '', '', '']
const radiusRows = [['Radius 1', '8', 'p1783=8', '', '', '', ''], blank, blank, blank, blank, blank]
const vRadiusRows = [
  ['V Radius 1', '8', 'p1784=8', '', '', '', ''],
  ['V Radius 2', '8', 'p1787=8', '', '', '', ''],
  ['V Radius 3', '12', 'p1790=12', '', '', '', ''],
  ['V Radius 4', '12', 'p2236=12', '', '', '', ''],
  ['V Radius 5', '12', 'p2333=12', '', '', '', ''],
  blank
]

const settings = ref([
  { label: 'Patch Mixed-convexity Corner', checked: false },
  { label: 'Remove Self-intersections', checked: true },
  { label: 'Patch Areas of Complex Geometry', checked: true },
  { label: 'Limit Blend to Avoid Failure Areas', checked: true },
  { label: 'Segment Blend to Match Face Segments', checked: true, disabled: true }
])

const handles: Handle[] = [
  { x: 139, y: 677, tips: [[107, 656], [150, 736]] },
  { x: 516, y: 523, tips: [[484, 503], [527, 582]] },
  { x: 251, y: 930, tips: [[207, 903], [236, 849]] },
  { x: 531, y: 816, tips: [[487, 789], [516, 735]], blue: true }
]

// unit direction of the shaft and the centre of the cone's base
const cone = (h: Handle, tip: number[]) => {
  const len = Math.hypot(tip[0] - h.x, tip[1] - h.y)
  const ux = (tip[0] - h.x) / len
  const uy = (tip[1] - h.y) / len
  const size = len > 55 ? 16 : 12
  return { ux, uy, bx: tip[0] - ux * size, by: tip[1] - uy * size }
}

const shaft = (h: Handle, tip: number[]) => {
  const { bx, by } = cone(h, tip)
  return `M${h.x} ${h.y}L${bx} ${by}`
}

const arrowHead = (h: Handle, tip: number[]) => {
  const { ux, uy, bx, by } = cone(h, tip)
  return `M${tip[0]} ${tip[1]}L${bx - uy * 4.5} ${by + ux * 4.5}Q${bx - ux * 3} ${by - uy * 3} ${bx + uy * 4.5} ${by - ux * 4.5}Z`
}
</script>

<style>
body {
  background: #323232;
  overflow: hidden;
}
</style>

<style scoped>
* {
  box-sizing: border-box;
}

.app {
  position: relative;
  width: 1484px;
  height: 1227px;
  overflow: hidden;
  display: flex;
  flex-direction: column;
  background: #323232;
  color: #f2f2f2;
  font: 13px/17px "Noto Sans", "Noto Sans CJK SC", sans-serif;
  white-space: nowrap;
}

.sprite {
  position: absolute;
}

svg {
  display: block;
  flex: none;
}

h3, h4, p {
  margin: 0;
}

em {
  font-style: normal;
}

.i26 { width: 26px; height: 26px; }
.i22 { width: 22px; height: 22px; }
.i20 { width: 20px; height: 20px; }
.i18 { width: 18px; height: 18px; }
.i16 { width: 16px; height: 16px; }

.caret {
  flex: none;
  width: 0;
  height: 0;
  border: 3.5px solid transparent;
  border-top: 4px solid #fff;
  border-bottom: 0;
}

.caret.big {
  border-left-width: 4px;
  border-right-width: 4px;
}

.caret.dim { border-top-color: #888; }
.caret.dark { border-top-color: #222; }

/* ribbon */
.ribbon {
  flex: none;
  display: flex;
  height: 73px;
  border-bottom: 1px solid #1b1b1b;
  overflow: hidden;
  font-size: 12px;
  letter-spacing: -.35px;
}

.group {
  height: 72px;
  display: flex;
  flex-direction: column;
  background: linear-gradient(#191919, #191919) right top / 1px 68px no-repeat;
}

.g-first { width: 56px; }
.g-copy { width: 147px; padding-left: 4px; }
.g-sync { width: 543px; }
.g-jin { width: 113px; }

.group-body {
  display: flex;
  height: 52px;
  overflow: hidden;
}

.group-label {
  display: flex;
  align-items: center;
  height: 20px;
  padding-top: 1px;
  color: #3fa2c4;
}

.group-label span {
  flex: 1;
  padding-right: 4px;
  text-align: center;
}

.g-copy .group-label span { padding-right: 9px; }

.group-label .caret {
  margin: 0 8px 0 auto;
}

.icon-box {
  height: 50px;
  border: 1px solid #191919;
  border-top: 0;
  display: grid;
  grid-auto-rows: 32px;
  align-content: end;
  place-items: center;
}

.icon-box.one { width: 34px; border-left: 0; padding-left: 2px; }
.icon-box.four { width: 124px; grid-template-columns: 30px 29px 31px 32px; padding-left: 1px; }

.arrows {
  display: flex;
  flex-direction: column;
  align-items: center;
  gap: 18px;
  width: 18px;
  padding-top: 14px;
}

.caret.bar {
  position: relative;
}

.caret.bar::before {
  content: '';
  position: absolute;
  left: -3.5px;
  top: -7px;
  width: 7px;
  height: 1px;
  background: #fff;
}

.commands {
  width: 389px;
  padding-left: 12px;
  display: grid;
  grid-template-columns: 111px 70px 91px auto;
  grid-auto-rows: 34px;
  align-content: end;
}

.command {
  display: flex;
  align-items: center;
  gap: 2px;
}

.small-box {
  width: 132px;
  height: 50px;
  border: 1px solid #191919;
  border-top: 0;
  display: flex;
  flex-direction: column;
  justify-content: flex-end;
}

.small-cmd {
  height: 22px;
  display: flex;
  align-items: center;
  gap: 4px;
  padding: 1px 0 0 2px;
}

.jin-icons {
  display: grid;
  grid-template-columns: 33px 33px 33px;
  grid-auto-rows: 32px;
  place-items: center;
  align-content: end;
  padding: 0 0 1px 7px;
}

/* snap toolbar */
.toolbar {
  flex: none;
  height: 29px;
  display: flex;
  align-items: center;
  border-bottom: 2px solid #202020;
}

.snap {
  width: 23px;
  height: 22px;
  margin: 0 1px;
  display: flex;
  align-items: center;
  justify-content: center;
}

.snap.on { background: #00547f; }
.snap.edge { width: 6.5px; margin: 0; justify-content: flex-end; overflow: hidden; }

.tool-sep {
  width: 1px;
  height: 20px;
  margin: 0 12px 0 6.5px;
  background: #191919;
}

.tool-sep.last { margin: 0 0 0 9px; }

.layer-select {
  width: 49px;
  height: 22px;
  border: 1px solid #d5d5d5;
  display: flex;
  align-items: center;
  justify-content: space-between;
  padding: 0 4px 0 1px;
}

.t1 { margin: 0 6px 0 6px; }
.t2 { margin: 0 6px 0 9px; }
.t3 { margin-left: 6px; }
.t4 { margin-left: 5px; }

/* work area */
.main {
  flex: 1;
  display: flex;
  min-height: 0;
}

.work {
  width: 1279px;
  display: flex;
  flex-direction: column;
}

.border-bar {
  height: 48px;
  border-bottom: 2px solid #2b93b5;
}

.viewport {
  position: relative;
  flex: 1;
  overflow: hidden;
  background: linear-gradient(#212325, #5b5c5e);
}

.axis {
  font: 13px "Liberation Sans", sans-serif;
}

.leader {
  fill: none;
  stroke: #a08c65;
  stroke-width: 1;
}

.selection-bar {
  position: absolute;
  left: 72px;
  top: 5px;
  width: 305px;
  height: 34px;
  background: #323232;
  border-bottom: 1px solid #181818;
  display: flex;
  align-items: center;
  padding-left: 13px;
}

.tangent {
  width: 156px;
  height: 22px;
  border: 1px solid #999;
  background: #4b4b4b;
  color: #8d8d8d;
  font-size: 12px;
  letter-spacing: -.3px;
  display: flex;
  align-items: center;
  justify-content: space-between;
  padding: 0 4px 0 2px;
}

.tangent .caret { border-top-color: #999; }
.dimtool { width: 26px; height: 26px; margin-left: 7px; }
.ellipsis { width: 20px; margin: 0 8px 0 13px; color: #777; font-size: 16px; letter-spacing: 1px; }
.aim { width: 24px; height: 24px; margin-right: 5px; }

.sel-end {
  height: 26px;
  margin-left: 11px;
  padding: 21px 0 0 3px;
  border-left: 1px solid #191919;
}

.grip {
  flex: none;
  width: 8px;
  background: radial-gradient(circle at 1.5px 1.5px, #e4e4e4 1.1px, transparent 1.4px) 0 0 / 4px 4px;
}

.tag {
  position: absolute;
  left: 411px;
  top: 325px;
  width: 88px;
  height: 29px;
  border: 1px solid #191919;
  background: #464646;
  display: flex;
  align-items: center;
  gap: 7px;
  padding-left: 2px;
}

.tag .grip { height: 24px; }

.mini {
  position: absolute;
  left: 596px;
  top: 635px;
  width: 212px;
  height: 57px;
  border: 1px solid #191919;
  background: #464646;
  display: flex;
  padding: 3px;
}

.mini .grip { height: 52px; margin-right: 6px; margin-left: -1px; }
.mini-body { flex: 1; }

.mini-row {
  display: flex;
  align-items: center;
  justify-content: space-between;
  height: 23px;
}

.mini-row > span:first-child { padding-left: 3px; }
.mini-row > div + span { letter-spacing: -.25px; padding-left: 2px; }

.mini-field {
  width: 62px;
  height: 23px;
  border: 1px solid #ccc;
  display: flex;
  align-items: center;
  justify-content: space-between;
  padding: 0 4px;
  letter-spacing: -.3px;
}

.mini-type {
  width: 45px;
  height: 26px;
  margin-left: 1px;
  margin-top: 3px;
  border: 1px solid #ccc;
  display: flex;
  align-items: center;
  justify-content: space-between;
  padding: 0 5px 0 4px;
}

.note {
  position: absolute;
  left: 257px;
  top: 839px;
  color: #f00;
  font: bold 20.6px/30px "Noto Sans CJK SC", sans-serif;
  letter-spacing: .96px;
  text-spacing-trim: space-all;
}

/* part navigator */
.navigator {
  width: 205px;
  border-left: 1px solid #191919;
  padding-left: 9px;
  display: flex;
  flex-direction: column;
  letter-spacing: -.15px;
}

.navigator > div { flex: none; }

.nav-title {
  height: 49px;
  display: flex;
  align-items: center;
  gap: 4px;
  padding: 18px 0 0 2px;
  letter-spacing: -.25px;
}

.nav-list {
  border-left: 1px solid #191919;
  border-top: 1px solid #191919;
}

.nav-head {
  height: 20px;
  background: #5a5a5a;
  display: flex;
  align-items: center;
  gap: 17px;
  padding: 0 0 1px 6px;
}

.up {
  border: 5px solid transparent;
  border-bottom: 5px solid #fff;
  border-top: 0;
}

.nav-row {
  height: 20px;
  display: flex;
  align-items: center;
  background: #323232;
  border-bottom: 1px solid #232323;
}

.nav-row:nth-child(odd) { background: #373737; }
.nav-row span { padding-left: 3px; }
.bold { font-weight: 700; }
.dim { color: #858585; }

.nav-scroll {
  height: 18px;
  margin: 13px 0 0 1px;
  background: #efefef;
  border-bottom: 1px solid #191919;
}

.nav-scroll i {
  display: block;
  height: 2px;
  margin: 8px 0 0 17px;
  background: #858585;
}

.nav-search {
  display: flex;
  align-items: center;
  gap: 2px;
  height: 40px;
  margin: 2px 0 0 1px;
  padding: 0 0 0 8px;
  border-top: 1px solid #191919;
  background: linear-gradient(#464646, #464646) 0 0 / 100% 3px no-repeat;
  color: #3fa2c4;
  letter-spacing: .2px;
}

/* dialog */
.dialog {
  position: absolute;
  left: 869px;
  top: 0;
  width: 322px;
  height: 1227px;
  background: #323232;
  border: solid #191919;
  border-width: 0 1px;
  padding-top: 2px;
  overflow: hidden;
}

.dlg-title {
  height: 24px;
  margin: 0 -1px;
  background: #3096b9;
  display: flex;
  align-items: center;
  padding: 0 10px 0 6px;
  font-size: 14.5px;
  color: #fff;
}

.dlg-title span { margin-left: 7px; letter-spacing: -.1px; }
.reset { margin-left: auto; }

.help {
  width: 8px;
  margin: 0 12px 0 8px;
  font-size: 16px;
  text-align: center;
}

.panels {
  display: flex;
  flex-direction: column;
  gap: 3px;
  padding: 4px 5px 0 5px;
}

.panel {
  width: 310px;
  border: 1px solid #191919;
  background: #464646;
  padding: 0 8px;
}

.p-edge { height: 335px; }
.p-var { height: 334px; }
.closed { height: 25px; }
.panel.closed { height: 24px; }
.p-len { height: 60px; }
.p-over { height: 205px; }
.p-set { height: 178px; }

h3 {
  display: flex;
  align-items: center;
  height: 23px;
  color: #3fa2c4;
  font-size: 13px;
  font-weight: 700;
  letter-spacing: .45px;
}

.panel > h3 { margin-left: -1px; }

.tri {
  width: 0;
  height: 0;
  margin-right: 7px;
  border: 4.5px solid transparent;
  border-top: 5px solid #3fa2c4;
  border-bottom: 0;
}

.tri.right {
  margin: 0 8px 0 3px;
  border: 4.5px solid transparent;
  border-left: 4px solid #3fa2c4;
  border-right: 0;
}

.p-edge > h3 { margin-bottom: 7px; }
.p-var > h3 { margin-bottom: 7px; }

.p-len > h3,
.p-over > h3,
.p-set > h3 {
  letter-spacing: .2px;
}

.row {
  display: flex;
  align-items: center;
  margin-bottom: 2px;
  letter-spacing: -.1px;
}

.row label { flex: 1; }
.row .picked { margin-left: 4px; }
.h23 { height: 23px; }
.h24 { height: 24px; }
.h25 { height: 25px; }
.h26 { height: 26px; }
.h32 { height: 32px; }

.combo {
  width: 138px;
  height: 100%;
  border: 1px solid #d5d5d5;
  display: flex;
  align-items: center;
  padding: 0 5px 0 4px;
}

.combo > .i16 { margin-left: 1px; }
.combo > svg + span { margin-left: 2px; letter-spacing: -.25px; }
.combo > svg + span:not(.tight) { margin-left: 3px; }
.combo > .caret { margin-left: auto; }
.combo.num { padding: 0 4px; }
.combo em { margin-left: auto; letter-spacing: 0; }
.combo em + .caret { margin-left: 19px; }
.sel { background: #0a77d8; border-left: 1px solid #e07818; }
.long { letter-spacing: -.35px; }

.cube-btn {
  width: 32px;
  height: 32px;
  border: 1px solid #d5d5d5;
  display: flex;
  align-items: center;
  justify-content: center;
}

.add-btn {
  width: 24px;
  height: 24px;
  border: 1px solid #8d8d8d;
  display: flex;
  align-items: center;
  justify-content: center;
}

.sub {
  width: 292px;
  border: 1px solid #191919;
  padding-left: 8px;
}

.sub > h3 { margin-left: -1px; }
.sub > h3 .tri:not(.right) { margin-right: 9px; }
.sub > h3 .tri.right { margin-right: 10px; }

.list-edge { height: 151px; margin-top: 4px; }
.list-var { height: 156px; margin-top: 4px; }
.list-wrap { display: flex; gap: 2px; margin-top: 7px; }

.grid-list {
  width: 248px;
  border: 1px solid #191919;
  background: #2f2f2f;
  padding: 1px 0 1px 1px;
  overflow: hidden;
}

.short { height: 111px; }
.tall { height: 116px; }

.grid-row {
  display: grid;
  height: 20px;
  width: 244px;
  border-bottom: 1px solid #282828;
  background: #323232;
}

.grid-row:nth-child(even) { background: #363636; }
.grid-row.on { background: #00547f; }
.short .grid-row { grid-template-columns: 57px 15px 60px 12px 12px 12px 76px; }
.tall .grid-row { grid-template-columns: 69px 22px 67px 12px 12px 12px 50px; }

.grid-row b {
  font-weight: 400;
  line-height: 18px;
  padding-left: 4px;
  border-right: 1px solid #232323;
}

.grid-row b:first-child { padding-left: 3px; }

.x-btn {
  width: 24px;
  height: 24px;
  border: 1px solid #d5d5d5;
  display: flex;
  align-items: center;
  justify-content: center;
}

.specify { color: #2b2b1c; letter-spacing: -.3px; }

.spec-label {
  width: 215px;
  height: 32px;
  line-height: 31px;
  background: #fdb006;
}

.pt-btn {
  width: 24px;
  height: 24px;
  margin: 0 2px;
  border: 1px solid #d5d5d5;
}

.infer {
  width: 49px;
  height: 32px;
  display: flex;
  background: #fdb006;
  border: 1px solid #ff9d1e;
}

.infer-drop {
  width: 17px;
  display: flex;
  align-items: center;
  justify-content: center;
  border-left: 1px solid #ff9d1e;
}

.check {
  display: flex;
  align-items: center;
  height: 23px;
  padding-left: 1px;
  letter-spacing: -.3px;
}

.check.dim { color: #7c7c7c; }
.check.soft { height: 25px; letter-spacing: -.25px; }
.check.len { margin-top: 6px; letter-spacing: -.42px; }

.cb {
  flex: none;
  width: 13px;
  height: 13px;
  margin-right: 4px;
  border: 1px solid #777;
  border-radius: 3px;
  background: #f4f4f4;
}

.cb.yes { background: #0a5fb8; border-color: #0a5fb8; }
.cb.off { background: #b9b9b9; border-color: #b9b9b9; }

.p-over .sub.closed { margin-top: 9px; }
.p-over .explicit { height: 106px; margin-top: 4px; }
.p-over .explicit + .closed { margin-top: 4px; }
.explicit > h3 { margin-bottom: 7px; }

.roll {
  display: flex;
  align-items: center;
  height: 32px;
  margin-bottom: 2px;
  letter-spacing: -.12px;
}

.roll label { padding-bottom: 1px; }
.roll .cube-btn { margin: 0 8px 0 auto; }

.p-set > h3 { margin-bottom: 6px; }
.tol { margin-top: 2px; }

.tol-field {
  width: 82px;
  height: 23px;
  border: 1px solid #d5d5d5;
  display: flex;
  align-items: center;
  justify-content: space-between;
  padding: 0 3px 0 4px;
}

.tol-field span { font: 15px "Liberation Mono", monospace; }

.preview {
  display: flex;
  align-items: center;
  height: 24px;
  margin-top: 4px;
  padding: 0 9px 0 10px;
  letter-spacing: -.3px;
}

.show { margin: 0 2px 0 auto; }
.mag { width: 24px; height: 24px; border: 1px solid #d5d5d5; }

/* alerts */
.alerts {
  position: absolute;
  left: 1191px;
  top: 585px;
  width: 290px;
  height: 161px;
  border: 1px solid #191919;
  border-left: 0;
  background: #464646;
  display: flex;
  gap: 6px;
  padding: 4px;
  letter-spacing: -.22px;
}

.alert-box {
  width: 251px;
  height: 152px;
  border: 1px solid #191919;
  padding: 3px 0 0 8px;
}

h4 {
  color: #3fa2c4;
  font-size: 12.5px;
  font-weight: 400;
}

.alert {
  display: flex;
}

.alert.info { margin-top: 9px; gap: 10px; }
.alert.info p { padding-top: 4px; }
.alert.err { margin-top: 5px; gap: 11px; padding-left: 1px; letter-spacing: -.29px; }
.alert.err svg { margin-top: -1px; }

.alert-close {
  width: 24px;
  height: 24px;
  border: 1px solid #d5d5d5;
  display: flex;
  align-items: center;
  justify-content: center;
}

.callouts {
  position: absolute;
  left: 795px;
  top: 610px;
}

.watermark {
  position: absolute;
  left: 1270px;
  top: 1202px;
  color: #d8d8d8;
  font: 13.33px/20px "Liberation Mono", monospace;
  white-space: pre;
}

.watermark span {
  font: 16px/20px "Noto Sans CJK SC", sans-serif;
  font-weight: 300;
}
</style>
